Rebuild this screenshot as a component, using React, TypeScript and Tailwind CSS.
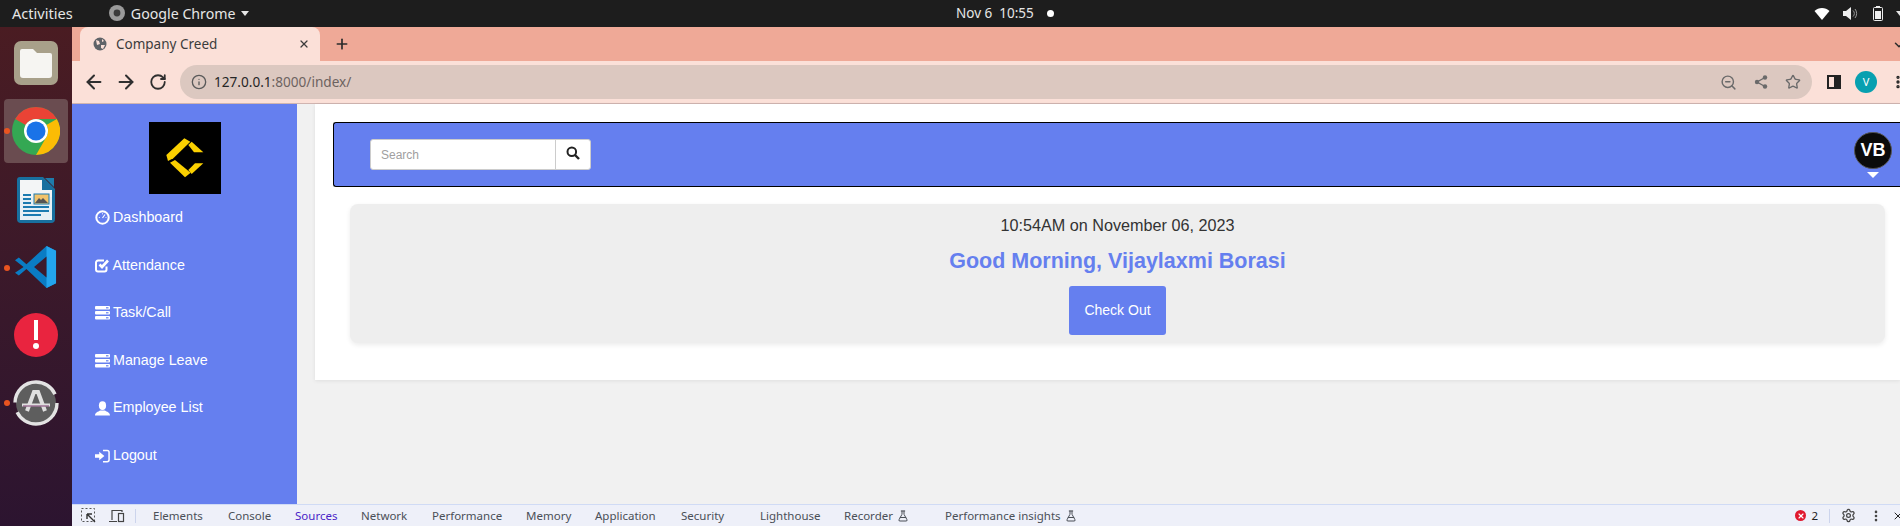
import React from 'react'
import {
  ArrowLeft,
  ArrowRight,
  RotateCw,
  Info,
  ZoomOut,
  Star,
  Plus,
  X,
  ChevronDown,
  Settings,
  EllipsisVertical,
  FlaskConical,
} from 'lucide-react'

const SANS = "font-['Liberation_Sans',Arial,sans-serif]"

function DashboardIcon() {
  return (
    <svg width="15" height="15" viewBox="0 0 15 15" className="text-white">
      <circle cx="7.5" cy="7.5" r="6.2" fill="none" stroke="currentColor" strokeWidth="2" />
      <path d="M7.5 8 L10 4.5" stroke="currentColor" strokeWidth="1.2" />
      <path d="M3.8 7.5h1M7 3.8h1M10.6 7.5h.8" stroke="currentColor" strokeWidth="1" />
    </svg>
  )
}

function CheckIcon() {
  return (
    <svg width="15" height="15" viewBox="0 0 15 15">
      <path d="M11.5 8.5V11.5a2 2 0 0 1-2 2H3a2 2 0 0 1-2-2V4.6a2 2 0 0 1 2-2h6" fill="none" stroke="#fff" strokeWidth="2" />
      <path d="M4.5 6.5 L7 9 L13 2.5" fill="none" stroke="#fff" strokeWidth="2.6" />
    </svg>
  )
}

function TasksIcon() {
  return (
    <svg width="15" height="14" viewBox="0 0 15 14">
      <rect x="0" y="0" width="15" height="3.6" rx="1" fill="#fff" />
      <rect x="0" y="5" width="15" height="3.6" rx="1" fill="#fff" />
      <rect x="0" y="10" width="15" height="3.6" rx="1" fill="#fff" />
      <rect x="11" y="1.2" width="2.5" height="1.2" fill="#657fef" />
      <rect x="11" y="6.2" width="2.5" height="1.2" fill="#657fef" />
      <rect x="11" y="11.2" width="2.5" height="1.2" fill="#657fef" />
    </svg>
  )
}

function UserIcon() {
  return (
    <svg width="15" height="15" viewBox="0 0 15 15">
      <ellipse cx="7.5" cy="4.6" rx="3.6" ry="4.4" fill="#fff" />
      <path d="M0 14.5c0-3.2 3.2-3.6 5-5h5c1.8 1.4 5 1.8 5 5z" fill="#fff" />
    </svg>
  )
}

function LoginIcon() {
  return (
    <svg width="16" height="14" viewBox="0 0 16 14">
      <path d="M8.5 1h4.5a2 2 0 0 1 2 2v8a2 2 0 0 1-2 2H8.5" fill="none" stroke="#fff" strokeWidth="1.6" />
      <path d="M0 5.2h4.5V2.4L10 7l-5.5 4.6V8.8H0z" fill="#fff" />
    </svg>
  )
}

function Logo() {
  return (
    <div className="h-[72px] w-[72px] bg-black">
      <svg width="72" height="72" viewBox="-3 -9 216 216">
        <path d="M103 40 L121 50 L70 100 L54 108 L49 90 Z" fill="#fbd000" />
        <path d="M60 113 L75 105 L122 143 L105 157 Z" fill="#fbd000" />
        <path d="M115 60 L125 50 L160 82 L132 82 Z" fill="#fbd000" />
        <path d="M115 135 L135 115 L160 115 L125 147 Z" fill="#fbd000" />
      </svg>
    </div>
  )
}

function NavItem({ icon, label, gap }: { icon: React.ReactNode; label: string; gap: string }) {
  return (
    <div className={`flex h-[47.6px] items-center pl-[22.5px] text-[14.3px] text-white ${gap}`}>
      <span className="flex w-[15px] items-center justify-center">{icon}</span>
      <span>{label}</span>
    </div>
  )
}

function Sidebar() {
  return (
    <aside className={`flex w-[225px] shrink-0 flex-col bg-[#657fef] ${SANS}`}>
      <div className="flex justify-center pt-[18px]">
        <Logo />
      </div>
      <nav>
        <NavItem icon={<DashboardIcon />} label="Dashboard" gap="gap-[3.5px]" />
        <NavItem icon={<CheckIcon />} label="Attendance" gap="gap-[3px]" />
        <NavItem icon={<TasksIcon />} label="Task/Call" gap="gap-[3.5px]" />
        <NavItem icon={<TasksIcon />} label="Manage Leave" gap="gap-[3.5px]" />
        <NavItem icon={<UserIcon />} label="Employee List" gap="gap-[3.5px]" />
        <NavItem icon={<LoginIcon />} label="Logout" gap="gap-[3.5px]" />
      </nav>
    </aside>
  )
}

function DockIcons() {
  return (
    <div className="flex flex-col items-center pt-[13px]">
      {/* files */}
      <div className="flex h-[46px] items-center justify-center">
        <svg width="46" height="46" viewBox="0 0 46 46">
          <rect x="1" y="1" width="44" height="44" rx="7" fill="#a8a08a" />
          <path d="M7 11a2 2 0 0 1 2-2h11l4 4h13a2 2 0 0 1 2 2v20a3 3 0 0 1-3 3H10a3 3 0 0 1-3-3z" fill="#f6f5f2" />
        </svg>
      </div>
      {/* chrome */}
      <div className="relative mt-[13px] flex h-[64px] w-[64px] items-center justify-center rounded bg-[#6a4c50]">
        <span className="absolute left-[0px] top-[29px] h-[6px] w-[6px] rounded-full bg-[#e95420]" />
        <svg width="48" height="48" viewBox="0 0 48 48">
          <circle cx="24" cy="24" r="24" fill="#34a853" />
          <path d="M24 0A24 24 0 0 1 44.8 12H24A12 12 0 0 0 13.6 18L3.2 12A24 24 0 0 1 24 0z" fill="#ea4335" />
          <path d="M44.8 12A24 24 0 0 1 24 48L34.4 30A12 12 0 0 0 34.4 18z" fill="#fbbc05" />
          <circle cx="24" cy="24" r="12" fill="#fff" />
          <circle cx="24" cy="24" r="9.5" fill="#1a73e8" />
        </svg>
      </div>
      {/* writer */}
      <div className="mt-[14px] flex h-[46px] items-center justify-center">
        <svg width="38" height="46" viewBox="0 0 38 46">
          <path d="M3 0h23l12 12v30a4 4 0 0 1-4 4H4a4 4 0 0 1-4-4V3a3 3 0 0 1 3-3z" fill="#18709f" />
          <path d="M3 3h22v10h10v29a1 1 0 0 1-1 1H4a1 1 0 0 1-1-1z" fill="#f3f5f6" />
          <path d="M3 20h32v23H3z" fill="#e6f0f5" />
          <path d="M6 17h8v2H6zM6 21h8v2H6zM6 25h8v2H6zM6 29h26v2H6zM6 33h26v2H6zM6 37h18v2H6z" fill="#1b7bb0" />
          <rect x="17" y="17" width="15" height="10" fill="#f2c36b" stroke="#1b7bb0" />
          <path d="M18 26l4-5 2 2 2-2 5 5z" fill="#555" />
          <path d="M28 1l9 0 0 9z" fill="#1f7cab" />
        </svg>
      </div>
      {/* vs code */}
      <div className="relative mt-[23px] flex h-[42px] w-[72px] items-center justify-center">
        <span className="absolute left-[4px] top-[19px] h-[6px] w-[6px] rounded-full bg-[#e95420]" />
        <svg width="42" height="42" viewBox="0 0 44 44">
          <path d="M33 0 L43 5 V39 L33 44 L12 24 L4 31 L0 28 L9 22 L0 15 L4 12 L12 19z" fill="#0a7cc4" />
          <path d="M33 0 L43 5 V39 L33 44z" fill="#23a5ee" />
          <path d="M33 11 L20 22 L33 33z" fill="#3d1a2c" />
        </svg>
      </div>
      {/* update */}
      <div className="mt-[25px] flex h-[44px] items-center justify-center">
        <svg width="44" height="44" viewBox="0 0 44 44">
          <circle cx="22" cy="22" r="22" fill="#e9243f" />
          <rect x="20" y="7" width="4" height="20" fill="#fff" />
          <circle cx="22" cy="33" r="3" fill="#fff" />
        </svg>
      </div>
      {/* software updater */}
      <div className="relative mt-[23px] flex h-[46px] w-[72px] items-center justify-center">
        <span className="absolute left-[4px] top-[20px] h-[6px] w-[6px] rounded-full bg-[#e95420]" />
        <svg width="46" height="46" viewBox="0 0 46 46">
          <circle cx="23" cy="23" r="20" fill="#5e5e5e" />
          <circle cx="23" cy="23" r="21" fill="none" stroke="#e3e3e3" strokeWidth="3.4" strokeDasharray="56 10" />
          <path d="M14 31 L21 12 H25 L32 31" fill="none" stroke="#e0e0e0" strokeWidth="4" />
          <path d="M9 25 H37" stroke="#e0e0e0" strokeWidth="3" />
          <path d="M10 26 H36" stroke="#7c3a70" strokeWidth="1" />
        </svg>
      </div>
    </div>
  )
}

function TopBar() {
  return (
    <header className="relative flex h-[27px] shrink-0 items-center justify-between bg-[#1d1d1d] pl-3 pr-0 font-['Noto_Sans',sans-serif] text-[13.5px] text-[#e6e6e6]">
      <div className="flex items-center">
        <span className="text-[14.6px]">Activities</span>
        <svg width="16" height="16" viewBox="0 0 16 16" className="ml-[36px]">
          <circle cx="8" cy="8" r="8" fill="#9a9a9a" />
          <circle cx="8" cy="8" r="3.4" fill="#3a3a3a" />
        </svg>
        <span className="ml-[6px] text-[14.2px]">Google Chrome</span>
        <span className="ml-[5px] h-0 w-0 border-x-[4.5px] border-t-[5px] border-x-transparent border-t-[#e6e6e6]" />
      </div>
      <div className="absolute left-[956px] flex items-center">
        <span>Nov 6&nbsp;&nbsp;10:55</span>
        <span className="ml-[13px] h-[7px] w-[7px] rounded-full bg-white" />
      </div>
      <div className="flex items-center">
        <svg width="16" height="12" viewBox="0 0 15 12">
          <path d="M0 3 C4 -1 11 -1 15 3 L7.5 12z" fill="#fff" />
        </svg>
        <svg width="15" height="13" viewBox="0 0 15 13" className="ml-[13px]">
          <path d="M0 4h3l5-4v13l-5-4H0z" fill="#eee" />
          <path d="M10 3.5a4 4 0 0 1 0 6M12 2a7 7 0 0 1 0 9" fill="none" stroke="#999" />
        </svg>
        <svg width="10" height="15" viewBox="0 0 10 15" className="ml-[15px]">
          <rect x="3" y="0" width="4" height="2" fill="#eee" />
          <rect x="0.5" y="1.5" width="9" height="13" rx="1" fill="none" stroke="#eee" />
          <rect x="2" y="5" width="6" height="8" fill="#eee" />
        </svg>
        <span className="ml-[13px] mr-[-4px] h-0 w-0 border-x-[4.5px] border-t-[5px] border-x-transparent border-t-[#e6e6e6]" />
      </div>
    </header>
  )
}

function TabStrip() {
  return (
    <div className="flex h-[34px] shrink-0 items-end justify-between bg-[#efa997] pl-[8px] font-['Noto_Sans',sans-serif]">
      <div className="flex h-[34px] items-center">
        <div className="flex h-[34px] w-[240px] items-center rounded-t-lg bg-[#fbe0d8] pl-[13px] pr-[10px]">
          <svg width="14" height="14" viewBox="0 0 14 14">
            <circle cx="7" cy="7" r="6.5" fill="#5f6368" />
            <path d="M3 3l3 1 1 3-3 1zM9 2l2 2-2 1zM8 8l4 0-2 4-2-1z" fill="#fbe0d8" />
          </svg>
          <span className="ml-[9px] flex-1 text-[13.5px] text-[#3c3c3c]">Company Creed</span>
          <X size={12} strokeWidth={2.5} className="text-[#3c3c3c]" />
        </div>
        <Plus size={16} strokeWidth={2.5} className="ml-[14px] text-[#2b2b2b]" />
      </div>
      <ChevronDown size={14} strokeWidth={2.5} className="mb-[9px] mr-[-6px] text-[#2b2b2b]" />
    </div>
  )
}

function AddressBar() {
  return (
    <div className="flex h-[43px] shrink-0 items-center border-b border-[#d0b4b0] bg-[#fbe0d8] pl-[11px] font-['Noto_Sans',sans-serif]">
      <ArrowLeft size={22} strokeWidth={2.2} className="shrink-0 text-[#2f2f2f]" />
      <ArrowRight size={22} strokeWidth={2.2} className="ml-[10px] shrink-0 text-[#2f2f2f]" />
      <RotateCw size={18} strokeWidth={2.4} className="ml-[12px] shrink-0 text-[#2f2f2f]" />
      <div className="ml-[13px] flex h-[34px] w-[1632px] shrink-0 items-center rounded-full bg-[#dcc8c0] pl-[11px] pr-[10px]">
        <Info size={16} className="text-[#5a5a5a]" />
        <span className="ml-[7px] flex-1 text-[13.6px] text-[#6d6360]">
          <span className="text-[#262626]">127.0.0.1</span>:8000/index/
        </span>
        <ZoomOut size={17} className="text-[#6a6a6a]" />
        <svg width="14" height="14" viewBox="0 0 14 14" className="ml-[17px]">
          <path d="M11 2.5L3 7l8 4.5" fill="none" stroke="#6a6a6a" strokeWidth="1.4" />
          <circle cx="11" cy="2.5" r="2.2" fill="#6a6a6a" />
          <circle cx="3" cy="7" r="2.2" fill="#6a6a6a" />
          <circle cx="11" cy="11.5" r="2.2" fill="#6a6a6a" />
        </svg>
        <Star size={16} strokeWidth={2} className="ml-[17px] mr-[1px] text-[#6a6a6a]" />
      </div>
      <div className="ml-[15px] flex h-[14px] w-[14px] shrink-0 border-2 border-[#222]">
        <span className="ml-auto h-full w-[5px] bg-[#222]" />
      </div>
      <span className="ml-[14px] flex h-[22px] w-[22px] shrink-0 items-center justify-center rounded-full bg-[#07a0b0] text-[11px] text-white">
        V
      </span>
      <EllipsisVertical size={16} strokeWidth={3} className="ml-[13px] shrink-0 text-[#222]" />
    </div>
  )
}

function SearchBox() {
  return (
    <div className={`flex h-[31px] w-[221px] overflow-hidden rounded-[3px] border border-[#ccc] bg-white ${SANS}`}>
      <div className="flex flex-1 items-center pl-[10px] text-[12px] text-[#a0a0a0]">Search</div>
      <div className="flex w-[35px] items-center justify-center border-l border-[#ccc]">
        <svg width="14" height="14" viewBox="0 0 14 14" className="mt-[-3px]">
          <circle cx="5.8" cy="5.8" r="4.3" fill="none" stroke="#222" strokeWidth="2" />
          <path d="M9 9l4 4" stroke="#222" strokeWidth="2.4" />
        </svg>
      </div>
    </div>
  )
}

function Navbar() {
  return (
    <div className="flex h-[65px] items-center justify-between rounded-l-[3px] border-y-[1.5px] border-l-[1.5px] border-black bg-[#657fef] pl-[36px] pr-[8px]">
      <SearchBox />
      <div className="flex flex-col items-center pt-[1px]">
        <span className={`flex h-[37px] w-[38px] items-center justify-center rounded-full border border-[#555] bg-[#0b0b0b] text-[18px] font-bold text-white ${SANS}`}>
          VB
        </span>
        <span className="mt-[3px] h-0 w-0 border-x-[6px] border-t-[6px] border-x-transparent border-t-white" />
      </div>
    </div>
  )
}

function GreetingCard() {
  return (
    <div className={`mt-[17px] ml-[17px] mr-[15px] flex h-[139px] flex-col items-center rounded-[8px] bg-[#eeeeee] pt-[11px] shadow-[0_2px_5px_rgba(0,0,0,0.08)] ${SANS}`}>
      <p className="text-[16.2px] leading-[20px] text-[#333]">10:54AM on November 06, 2023</p>
      <h1 className="mt-[12px] text-[21.5px] font-bold leading-[28px] text-[#657fef]">
        Good Morning, Vijaylaxmi Borasi
      </h1>
      <button className="mt-[11px] h-[49px] w-[97px] rounded-[3px] bg-[#657fef] text-[14px] text-white">
        Check Out
      </button>
    </div>
  )
}

const TABS: [string, string, boolean?, boolean?][] = [
  ['Elements', 'w-[75px]'],
  ['Console', 'w-[67px]'],
  ['Sources', 'w-[66px]', true],
  ['Network', 'w-[71px]'],
  ['Performance', 'w-[94px]'],
  ['Memory', 'w-[69px]'],
  ['Application', 'w-[86px]'],
  ['Security', 'w-[79px]'],
  ['Lighthouse', 'w-[84px]'],
  ['Recorder', 'w-[101px]', false, true],
  ['Performance insights', 'w-[150px]', false, true],
]

function DevTools() {
  return (
    <div className="flex h-[22px] shrink-0 items-center justify-between overflow-hidden border-t border-[#d0dbf5] bg-[#eef0f9] font-['Noto_Sans',sans-serif] text-[11.5px] text-[#4a4f57]">
      <div className="flex items-center">
        <svg width="15" height="15" viewBox="0 0 15 15" className="ml-[9px]">
          <rect x="0.5" y="0.5" width="13" height="13" fill="none" stroke="#555" strokeDasharray="2 2" />
          <path d="M6 6l8 8M6 6h5M6 6v5" stroke="#333" strokeWidth="1.4" fill="none" />
        </svg>
        <svg width="16" height="14" viewBox="0 0 16 14" className="ml-[13px]">
          <path d="M3 11V1.5h10V3M0 12.5h8" fill="none" stroke="#444" strokeWidth="1.2" />
          <rect x="9.5" y="4.5" width="5" height="8" fill="none" stroke="#444" strokeWidth="1.2" />
        </svg>
        <span className="ml-[10px] mr-[17px] h-[14px] w-px bg-[#ccd4ec]" />
        {TABS.map(([label, w, active, flask]) => (
          <span key={label} className={`flex items-center gap-[4px] ${w} ${active ? 'text-[#4b1fc7]' : ''}`}>
            {label}
            {flask && <FlaskConical size={12} />}
          </span>
        ))}
      </div>
      <div className="flex items-center">
        <span className="flex h-[11px] w-[11px] items-center justify-center rounded-full bg-[#e0192f]">
          <X size={8} strokeWidth={3.5} className="text-white" />
        </span>
        <span className="ml-[5px] text-[#222]">2</span>
        <span className="ml-[11px] h-[14px] w-px bg-[#ccd4ec]" />
        <Settings size={15} className="ml-[11px] text-[#444]" />
        <EllipsisVertical size={14} strokeWidth={2.5} className="ml-[13px] text-[#444]" />
        <X size={12} strokeWidth={2} className="ml-[9px] mr-[-4px] text-[#222]" />
      </div>
    </div>
  )
}

export default function App() {
  return (
    <div className="flex h-[526px] w-[1900px] flex-col overflow-hidden">
      <TopBar />
      <div className="flex min-h-0 flex-1">
        <aside className="w-[72px] shrink-0 bg-gradient-to-b from-[#4a1c22] to-[#2c1430]">
          <DockIcons />
        </aside>
        <div className="flex min-w-0 flex-1 flex-col">
          <TabStrip />
          <AddressBar />
          <div className="flex min-h-0 flex-1 bg-[#f1f1f1]">
            <Sidebar />
            <main className="ml-[18px] h-[276px] flex-1 bg-white pt-[18px] pl-[18px] shadow-[0_1px_4px_rgba(0,0,0,0.08)]">
              <Navbar />
              <GreetingCard />
            </main>
          </div>
          <DevTools />
        </div>
      </div>
    </div>
  )
}
